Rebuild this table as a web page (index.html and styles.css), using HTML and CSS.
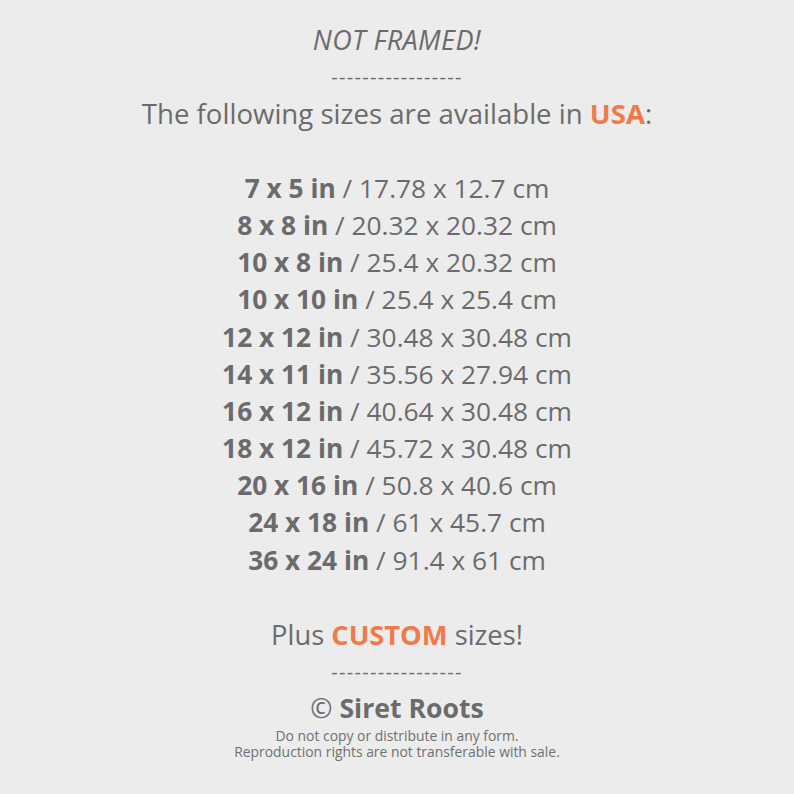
FILE: index.html
```html
<!DOCTYPE html>
<html>
<head>
<meta charset="utf-8">
<link rel="stylesheet" href="styles.css">
</head>
<body>
<div class="sheet">
  <div class="line note">NOT FRAMED!</div>
  <div class="line dashes">-----------------</div>
  <div class="line lead">The following sizes are available in <b class="accent">USA</b>:</div>
  <div class="line blank"></div>
  <div class="line size"><b>7 x 5 in</b> / 17.78 x 12.7 cm</div>
  <div class="line size"><b>8 x 8 in</b> / 20.32 x 20.32 cm</div>
  <div class="line size"><b>10 x 8 in</b> / 25.4 x 20.32 cm</div>
  <div class="line size"><b>10 x 10 in</b> / 25.4 x 25.4 cm</div>
  <div class="line size"><b>12 x 12 in</b> / 30.48 x 30.48 cm</div>
  <div class="line size"><b>14 x 11 in</b> / 35.56 x 27.94 cm</div>
  <div class="line size"><b>16 x 12 in</b> / 40.64 x 30.48 cm</div>
  <div class="line size"><b>18 x 12 in</b> / 45.72 x 30.48 cm</div>
  <div class="line size"><b>20 x 16 in</b> / 50.8 x 40.6 cm</div>
  <div class="line size"><b>24 x 18 in</b> / 61 x 45.7 cm</div>
  <div class="line size"><b>36 x 24 in</b> / 91.4 x 61 cm</div>
  <div class="line blank"></div>
  <div class="line plus">Plus <b class="accent">CUSTOM</b> sizes!</div>
  <div class="line dashes">-----------------</div>
  <div class="line brand">© <b>Siret Roots</b></div>
  <div class="fine">Do not copy or distribute in any form.</div>
  <div class="fine">Reproduction rights are not transferable with sale.</div>
</div>
</body>
</html>
```
FILE: styles.css
```css
html, body {
  margin: 0;
  padding: 0;
  background: #ebeceb;
}
.sheet {
  width: 794px;
  height: 794px;
  box-sizing: border-box;
  padding-top: 21px;
  display: flex;
  flex-direction: column;
  align-items: center;
  font-family: "Open Sans", "DejaVu Sans", sans-serif;
  color: #6b6b6b;
}
.line {
  height: 37.2px;
  line-height: 37.2px;
  white-space: nowrap;
  text-align: center;
}
.note {
  font-style: italic;
  font-size: 27px;
  letter-spacing: 0.4px;
}
.dashes {
  font-size: 20px;
  letter-spacing: 1.3px;
}
.lead {
  font-size: 27.6px;
}
.plus {
  font-size: 27.3px;
}
.size {
  font-size: 26.3px;
}
.size b {
  font-weight: 700;
}
.accent {
  color: #f07b48;
  font-weight: 700;
}
.brand {
  font-size: 26.6px;
}
.brand b {
  font-weight: 700;
}
.fine {
  font-size: 13.9px;
  line-height: 16.5px;
  color: #707070;
}
.fine:first-of-type {
  margin-top: 1px;
}
```
